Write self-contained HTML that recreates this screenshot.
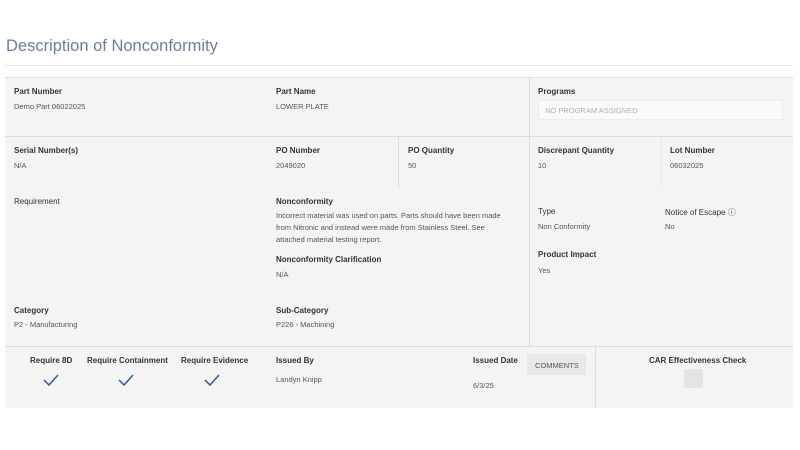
<!DOCTYPE html>
<html><head><meta charset="utf-8"><style>
*{margin:0;padding:0;box-sizing:border-box}
body{width:800px;height:450px;background:#fff;font-family:"Liberation Sans",sans-serif;position:relative;overflow:hidden;color:#333}
.a{position:absolute;white-space:nowrap}
.l{font-size:8px;font-weight:bold;color:#333}
.n{font-size:8px;color:#333}
.v{font-size:7.5px;color:#555}
.hl{position:absolute;height:1px;background:#dedede}
.vl{position:absolute;width:1px;background:#dedede}
.chk{position:absolute;width:16px;height:12px}
</style></head><body>
<div class="a" style="left:6px;top:37px;font-size:16.5px;color:#6c7e9e">Description of Nonconformity</div>
<div class="hl" style="left:5px;top:65px;width:788px;background:#e6e6e6"></div>
<div style="position:absolute;left:5px;top:77px;width:788px;height:331px;background:#f4f4f4;border-top:1px solid #e2e2e2"></div>
<div class="hl" style="left:5px;top:136px;width:788px"></div>
<div class="hl" style="left:5px;top:346px;width:788px"></div>
<div class="vl" style="left:529px;top:77px;height:269px"></div>
<div class="vl" style="left:398px;top:137px;height:51px"></div>
<div class="vl" style="left:661px;top:137px;height:51px;background:#e8e8e8"></div>
<div class="vl" style="left:595px;top:347px;height:61px"></div>

<div class="a l" style="left:14px;top:87px">Part Number</div>
<div class="a v" style="left:14px;top:102px">Demo Part 06022025</div>
<div class="a l" style="left:276px;top:87px">Part Name</div>
<div class="a v" style="left:276px;top:102px">LOWER PLATE</div>
<div class="a l" style="left:538px;top:87px">Programs</div>
<div style="position:absolute;left:538px;top:100px;width:245px;height:20px;background:#fafafa;border:1px solid #ececec"></div>
<div class="a v" style="left:545px;top:106px;color:#b0b0b0">NO PROGRAM ASSIGNED</div>

<div class="a l" style="left:14px;top:146px">Serial Number(s)</div>
<div class="a v" style="left:14px;top:161px">N/A</div>
<div class="a l" style="left:276px;top:146px">PO Number</div>
<div class="a v" style="left:276px;top:161px">2049020</div>
<div class="a l" style="left:408px;top:146px">PO Quantity</div>
<div class="a v" style="left:408px;top:161px">50</div>
<div class="a l" style="left:538px;top:146px">Discrepant Quantity</div>
<div class="a v" style="left:538px;top:161px">10</div>
<div class="a l" style="left:670px;top:146px">Lot Number</div>
<div class="a v" style="left:670px;top:161px">06032025</div>

<div class="a n" style="left:14px;top:197px">Requirement</div>
<div class="a l" style="left:276px;top:197px">Nonconformity</div>
<div class="a v" style="left:276px;top:210px;line-height:12px">Incorrect material was used on parts. Parts should have been made<br>from Nitronic and instead were made from Stainless Steel. See<br>attached material testing report.</div>
<div class="a l" style="left:276px;top:255px">Nonconformity Clarification</div>
<div class="a v" style="left:276px;top:270px">N/A</div>
<div class="a n" style="left:538px;top:207px">Type</div>
<div class="a v" style="left:538px;top:222px">Non Conformity</div>
<div class="a n" style="left:665px;top:207px">Notice of Escape ⓘ</div>
<div class="a v" style="left:665px;top:222px">No</div>
<div class="a l" style="left:538px;top:250px">Product Impact</div>
<div class="a v" style="left:538px;top:266px">Yes</div>
<div class="a l" style="left:14px;top:306px">Category</div>
<div class="a v" style="left:14px;top:320px">P2 - Manufacturing</div>
<div class="a l" style="left:276px;top:306px">Sub-Category</div>
<div class="a v" style="left:276px;top:320px">P226 - Machining</div>

<div class="a l" style="left:30px;top:356px">Require 8D</div>
<div class="a l" style="left:87px;top:356px">Require Containment</div>
<div class="a l" style="left:181px;top:356px">Require Evidence</div>
<svg class="chk" style="left:43px;top:374px" viewBox="0 0 16 12"><path d="M1 6 L6 11 L15 1" fill="none" stroke="#3c6296" stroke-width="1.6"/></svg>
<svg class="chk" style="left:118px;top:374px" viewBox="0 0 16 12"><path d="M1 6 L6 11 L15 1" fill="none" stroke="#3c6296" stroke-width="1.6"/></svg>
<svg class="chk" style="left:204px;top:374px" viewBox="0 0 16 12"><path d="M1 6 L6 11 L15 1" fill="none" stroke="#3c6296" stroke-width="1.6"/></svg>
<div class="a l" style="left:276px;top:356px">Issued By</div>
<div class="a v" style="left:276px;top:375px">Landyn Knipp</div>
<div class="a l" style="left:473px;top:356px">Issued Date</div>
<div class="a v" style="left:473px;top:381px">6/3/25</div>
<div style="position:absolute;left:527px;top:354px;width:59px;height:21px;background:#e8e8e8"></div>
<div class="a v" style="left:535px;top:361px;color:#555">COMMENTS</div>
<div class="a l" style="left:649px;top:356px">CAR Effectiveness Check</div>
<div style="position:absolute;left:684px;top:369px;width:19px;height:19px;background:#e4e4e4;border-radius:2px"></div>
</body></html>
